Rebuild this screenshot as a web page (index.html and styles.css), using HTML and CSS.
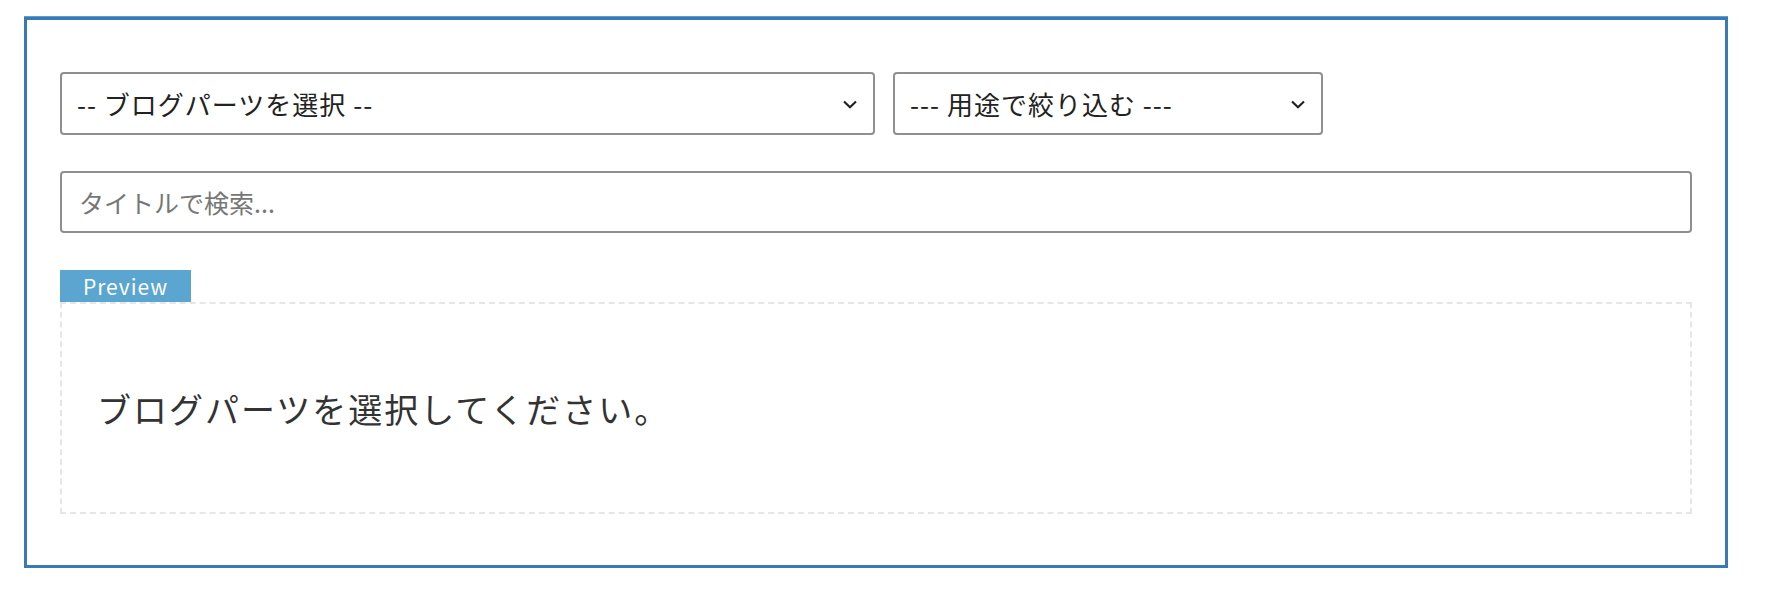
FILE: index.html
```html
<!DOCTYPE html>
<html lang="ja">
<head>
<meta charset="utf-8">
<title>ブログパーツ</title>
<link rel="stylesheet" href="styles.css">
</head>
<body>
<div class="panel">
  <div class="filters">
    <div class="select-wrap select-parts">
      <select class="select">
        <option>-- ブログパーツを選択 --</option>
      </select>
      <svg class="chevron" width="16" height="9" viewBox="0 0 16 9"><path d="M2 1.5 L8 7.2 L14 1.5" fill="none" stroke="#222" stroke-width="2.2"/></svg>
    </div>
    <div class="select-wrap select-use">
      <select class="select">
        <option>--- 用途で絞り込む ---</option>
      </select>
      <svg class="chevron" width="16" height="9" viewBox="0 0 16 9"><path d="M2 1.5 L8 7.2 L14 1.5" fill="none" stroke="#222" stroke-width="2.2"/></svg>
    </div>
  </div>
  <input class="search" type="text" placeholder="タイトルで検索...">
  <div class="preview">
    <div class="preview-label">Preview</div>
    <div class="preview-box">
      <p class="preview-text">ブログパーツを選択してください。</p>
    </div>
  </div>
</div>
</body>
</html>
```
FILE: styles.css
```css
html, body {
  margin: 0;
  padding: 0;
  background: #ffffff;
}
body {
  font-family: "Noto Sans CJK JP", "Noto Sans", sans-serif;
  color: #222;
  padding: 17px 0 0 24px;
}
.panel {
  box-sizing: border-box;
  width: 1704px;
  height: 551px;
  border: 3px solid #3a79b6;
  box-shadow: 0 -1px 0 #5a9fd2, 0 2px 0 #5a9fd2;
  padding: 52px 33px 0 33px;
}
.filters {
  display: flex;
  gap: 18px;
}
.select-wrap {
  position: relative;
  height: 63px;
}
.select-parts { width: 815px; }
.select-use { width: 430px; }
.select {
  -webkit-appearance: none;
  appearance: none;
  box-sizing: border-box;
  width: 100%;
  height: 63px;
  margin: 0;
  border: 2px solid #8f8f8f;
  border-radius: 4px;
  background: #fff;
  padding: 0 50px 0 15px;
  font-family: "Noto Sans CJK JP", "Noto Sans", sans-serif;
  font-size: 26px;
  letter-spacing: 1px;
  color: #222;
  outline: none;
}
.chevron {
  position: absolute;
  right: 17px;
  top: 28px;
}
.search {
  display: block;
  box-sizing: border-box;
  width: 100%;
  height: 62px;
  margin: 36px 0 0 0;
  border: 2px solid #8f8f8f;
  border-radius: 4px;
  padding: 0 17px;
  font-family: "Noto Sans CJK JP", "Noto Sans", sans-serif;
  font-size: 25px;
  color: #222;
  outline: none;
}
.search::placeholder {
  color: #777;
}
.preview {
  margin-top: 37px;
}
.preview-label {
  display: inline-block;
  vertical-align: top;
  height: 32px;
  line-height: 32px;
  width: 131px;
  text-align: center;
  background: #5ba5d1;
  color: #fff;
  font-family: "Noto Sans CJK JP", "Noto Sans", sans-serif;
  font-size: 21px;
  letter-spacing: 1px;
}
.preview-box {
  border: 2px dashed #e6e6e6;
  padding: 0 35px;
  height: 208px;
  display: flex;
  align-items: center;
}
.preview-text {
  margin: 0;
  font-size: 34px;
  letter-spacing: 2px;
  line-height: 1.5;
  color: #333;
}
```
